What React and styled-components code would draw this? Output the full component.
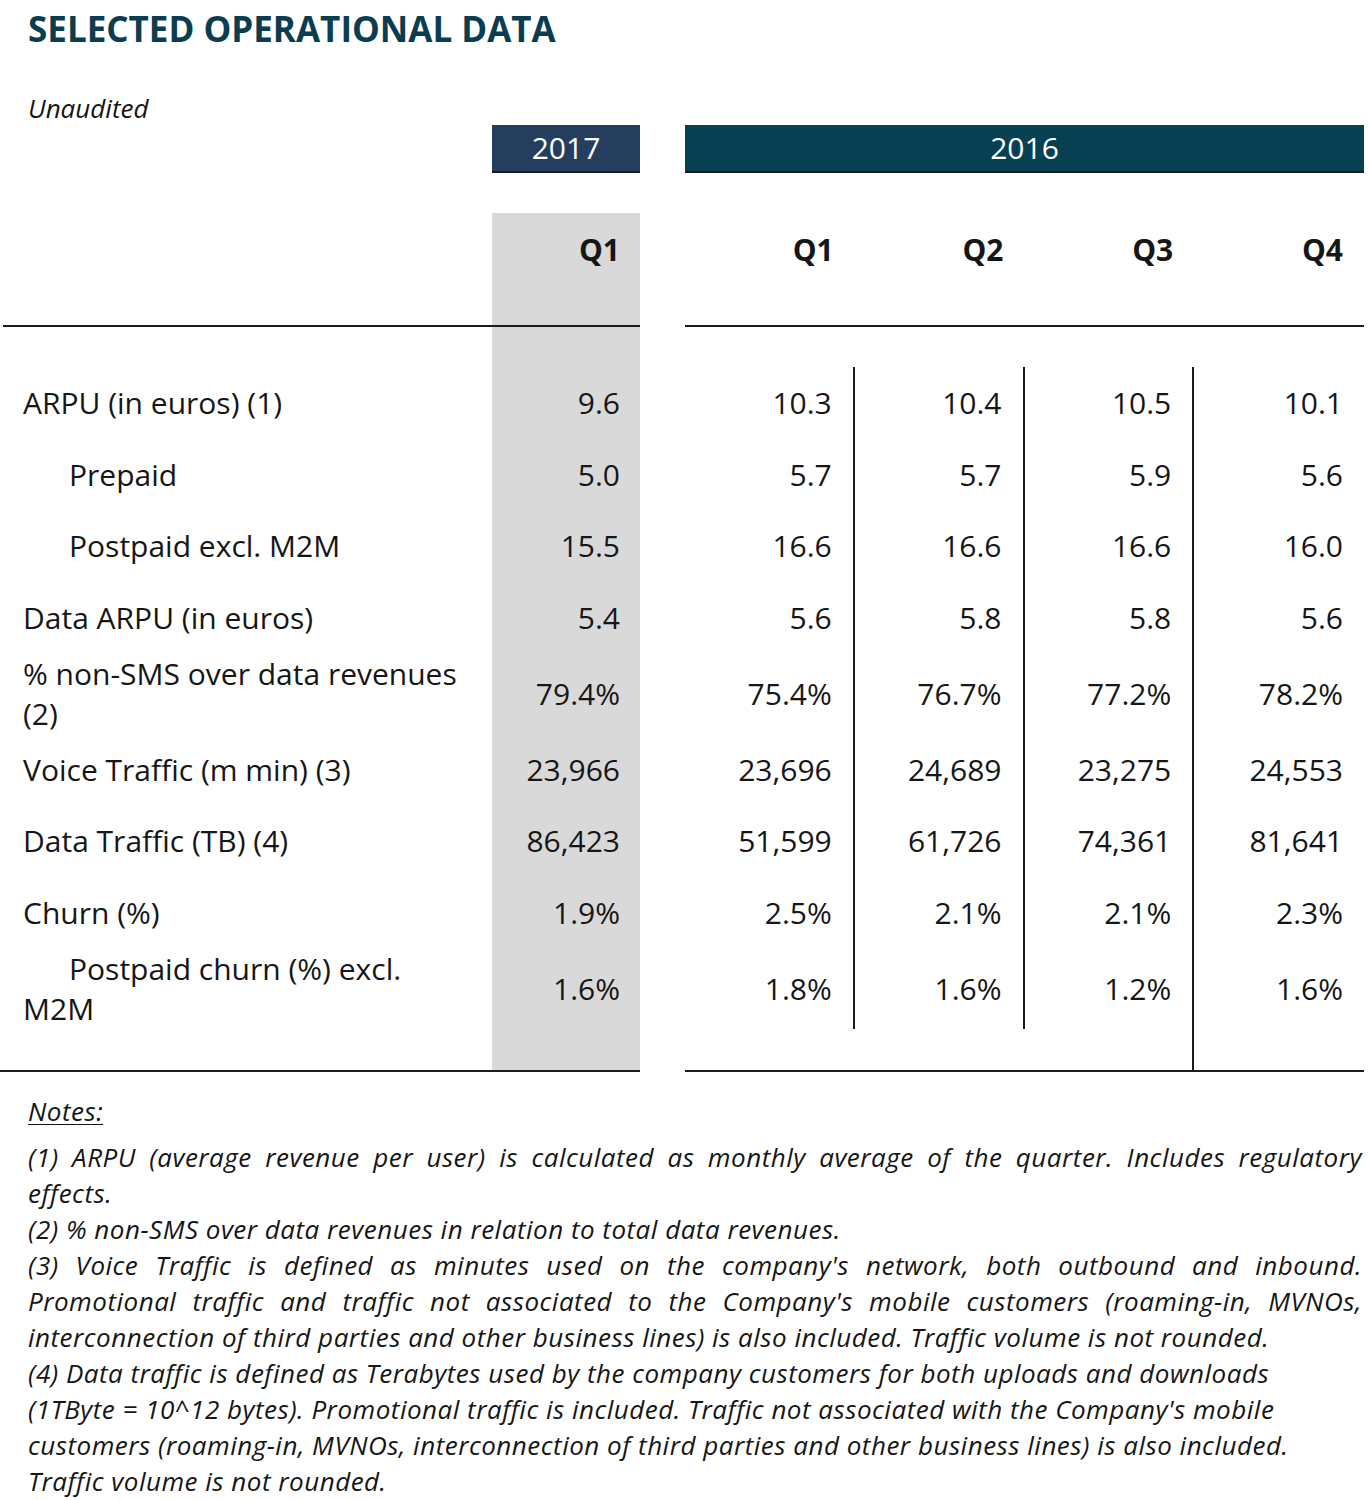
import React from 'react';
import styled, { createGlobalStyle } from 'styled-components';

const GlobalStyle = createGlobalStyle`
  body {
    margin: 0;
    background: #ffffff;
    color: #161616;
    font-family: "Open Sans", "Noto Sans", sans-serif;
  }
`;

const Page = styled.div`
  width: 1369px;
  padding-bottom: 10px;
`;

const Title = styled.h1`
  margin: 0;
  padding: 9px 0 0 28px;
  font-size: 35px;
  line-height: 40px;
  font-weight: 700;
  color: #0b3d50;
`;

const Caption = styled.div`
  margin-top: 44px;
  padding-left: 28px;
  font-size: 26px;
  line-height: 30px;
  font-style: italic;
`;

const Row = styled.div`
  width: 1364px;
  display: grid;
  grid-template-columns: 492px 148px 45px repeat(4, 1fr);
  min-height: ${(p) => p.$height || 'auto'};
`;

const YearRow = styled(Row)`
  margin-top: 2px;
  margin-bottom: 40px;
`;

const YearBand = styled.div`
  grid-column: ${(p) => p.$span || 'auto'};
  height: 46px;
  border-bottom: 2px solid #1c1c1c;
  background: ${(p) => p.$color};
  color: #ffffff;
  font-size: 30px;
  line-height: 46px;
  text-align: center;
`;

const Blank = styled.div``;

const HeadCell = styled.div`
  height: 114px;
  padding: 17px 21px 0 0;
  box-sizing: border-box;
  border-bottom: 2px solid #1c1c1c;
  background: ${(p) => (p.$shaded ? '#d9d9d9' : 'transparent')};
  font-size: 30px;
  line-height: 40px;
  font-weight: 700;
  text-align: right;
  padding-right: ${(p) => (p.$shaded ? '20px' : '21px')};
`;

const HeadLabel = styled(HeadCell)`
  margin-left: 3px;
`;

const Label = styled.div`
  display: flex;
  align-items: center;
  padding: 0 20px 0 23px;
  border-bottom: ${(p) => (p.$ruled ? '2px solid #1c1c1c' : 'none')};
  font-size: 30px;
  line-height: 40px;
`;

const LabelText = styled.div`
  text-indent: ${(p) => (p.$indent ? '46px' : '0')};
`;

const Value = styled.div`
  display: flex;
  align-items: center;
  justify-content: flex-end;
  padding-right: ${(p) => (p.$shaded ? '20px' : '21px')};
  background: ${(p) => (p.$shaded ? '#d9d9d9' : 'transparent')};
  border-right: ${(p) => (p.$divider ? '2px solid #1c1c1c' : 'none')};
  border-bottom: ${(p) => (p.$ruled ? '2px solid #1c1c1c' : 'none')};
  font-size: 30px;
  line-height: 40px;
  white-space: nowrap;
`;

const Notes = styled.div`
  margin-top: 21px;
  padding: 0 7px 0 28px;
  font-size: 26px;
  line-height: 36px;
  letter-spacing: 0.5px;
  font-style: italic;
`;

const NotesHeading = styled.div`
  text-decoration: underline;
  text-underline-offset: 3px;
  text-decoration-thickness: 1px;
  margin-bottom: 10px;
`;

const Line = styled.div`
  white-space: nowrap;
  text-align: ${(p) => (p.$justify ? 'justify' : 'left')};
  text-align-last: ${(p) => (p.$justify ? 'justify' : 'auto')};
`;

const rows = [
  { label: 'ARPU (in euros) (1)', values: ['9.6', '10.3', '10.4', '10.5', '10.1'] },
  { label: 'Prepaid', indent: true, values: ['5.0', '5.7', '5.7', '5.9', '5.6'] },
  { label: 'Postpaid excl. M2M', indent: true, values: ['15.5', '16.6', '16.6', '16.6', '16.0'] },
  { label: 'Data ARPU (in euros)', values: ['5.4', '5.6', '5.8', '5.8', '5.6'] },
  { label: '% non-SMS over data revenues (2)', values: ['79.4%', '75.4%', '76.7%', '77.2%', '78.2%'] },
  { label: 'Voice Traffic (m min) (3)', values: ['23,966', '23,696', '24,689', '23,275', '24,553'] },
  { label: 'Data Traffic (TB) (4)', values: ['86,423', '51,599', '61,726', '74,361', '81,641'] },
  { label: 'Churn (%)', values: ['1.9%', '2.5%', '2.1%', '2.1%', '2.3%'] },
  { label: 'Postpaid churn (%) excl. M2M', indent: true, values: ['1.6%', '1.8%', '1.6%', '1.2%', '1.6%'] },
];

const notes = [
  [
    { text: '(1) ARPU (average revenue per user) is calculated as monthly average of the quarter. Includes regulatory', justify: true },
    { text: 'effects.' },
  ],
  [{ text: '(2) % non-SMS over data revenues in relation to total data revenues.' }],
  [
    { text: "(3) Voice Traffic is defined as minutes used on the company's network, both outbound and inbound.", justify: true },
    { text: "Promotional traffic and traffic not associated to the Company's mobile customers (roaming-in, MVNOs,", justify: true },
    { text: 'interconnection of third parties and other business lines) is also included. Traffic volume is not rounded.' },
  ],
  [
    { text: '(4) Data traffic is defined as Terabytes used by the company customers for both uploads and downloads' },
    { text: "(1TByte = 10^12 bytes). Promotional traffic is included. Traffic not associated with the Company's mobile" },
    { text: 'customers (roaming-in, MVNOs, interconnection of third parties and other business lines) is also included.' },
    { text: 'Traffic volume is not rounded.' },
  ],
];

const quarters = ['Q1', 'Q2', 'Q3', 'Q4'];

export default function App() {
  return (
    <Page>
      <GlobalStyle />
      <Title>SELECTED OPERATIONAL DATA</Title>
      <Caption>Unaudited</Caption>

      <YearRow>
        <Blank />
        <YearBand $color="#253e5e">2017</YearBand>
        <Blank />
        <YearBand $color="#074052" $span="span 4">2016</YearBand>
      </YearRow>

      <Row>
        <HeadLabel />
        <HeadCell $shaded>Q1</HeadCell>
        <Blank />
        {quarters.map((q) => (
          <HeadCell key={q}>{q}</HeadCell>
        ))}
      </Row>

      <Row $height="40px">
        <Blank />
        <Value $shaded />
        <Blank />
      </Row>

      {rows.map((row) => (
        <Row key={row.label} $height="71.7px">
          <Label>
            <LabelText $indent={row.indent}>{row.label}</LabelText>
          </Label>
          <Value $shaded>{row.values[0]}</Value>
          <Blank />
          {row.values.slice(1).map((v, i) => (
            <Value key={i} $divider={i < 3}>
              {v}
            </Value>
          ))}
        </Row>
      ))}

      <Row $height="43px">
        <Label $ruled />
        <Value $shaded $ruled />
        <Blank />
        <Value $ruled />
        <Value $ruled />
        <Value $ruled $divider />
        <Value $ruled />
      </Row>

      <Notes>
        <NotesHeading>Notes:</NotesHeading>
        {notes.map((note, n) => (
          <div key={n}>
            {note.map((line, i) => (
              <Line key={i} $justify={line.justify}>
                {line.text}
              </Line>
            ))}
          </div>
        ))}
      </Notes>
    </Page>
  );
}
